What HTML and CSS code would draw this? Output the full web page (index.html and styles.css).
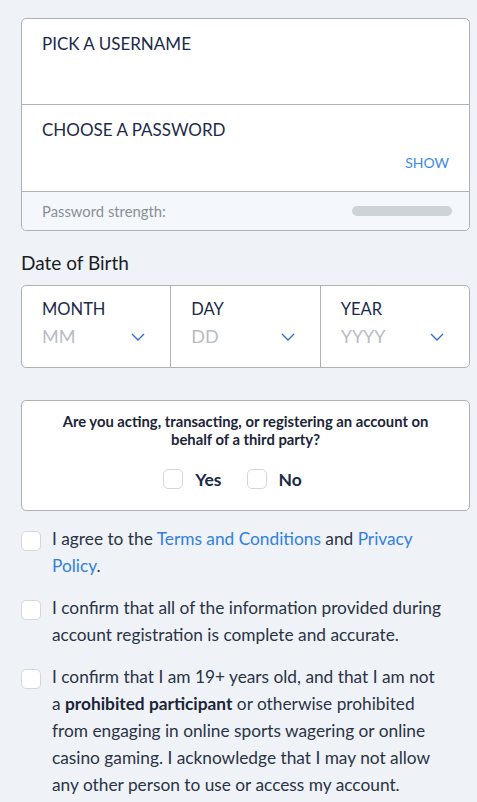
FILE: index.html
```html
<!doctype html>
<html>
<head>
<meta charset="UTF-8"/>
<title>Register</title>
<link rel="stylesheet" href="styles.css">
</head>
<body>
<div class="page">
    <div class="card creds">
        <div class="field">
            <div class="label">PICK A USERNAME</div>
        </div>
        <div class="field pass">
            <div class="label">CHOOSE A PASSWORD</div>
            <a class="show" href="javascript:">SHOW</a>
        </div>
        <div class="strength">
            <span>Password strength:</span>
            <span class="bar"></span>
        </div>
    </div>

    <div class="dob-title">Date of Birth</div>
    <div class="card dob">
        <div class="dob-col">
            <div class="label">MONTH</div>
            <div class="sel"><span>MM</span><svg width="14" height="8" viewBox="0 0 14 8"><path d="M1 1l6 6 6-6" fill="none" stroke="#2f6fd8" stroke-width="1.4"/></svg></div>
        </div>
        <div class="dob-col">
            <div class="label">DAY</div>
            <div class="sel"><span>DD</span><svg width="14" height="8" viewBox="0 0 14 8"><path d="M1 1l6 6 6-6" fill="none" stroke="#2f6fd8" stroke-width="1.4"/></svg></div>
        </div>
        <div class="dob-col">
            <div class="label">YEAR</div>
            <div class="sel"><span>YYYY</span><svg width="14" height="8" viewBox="0 0 14 8"><path d="M1 1l6 6 6-6" fill="none" stroke="#2f6fd8" stroke-width="1.4"/></svg></div>
        </div>
    </div>

    <div class="card third">
        <p>Are you acting, transacting, or registering an account on behalf of a third party?</p>
        <div class="choices">
            <label><span class="box"></span>Yes</label>
            <label><span class="box"></span>No</label>
        </div>
    </div>

    <div class="checks">
        <div class="check">
            <span class="box"></span>
            <p>I agree to the <a href="javascript:">Terms and Conditions</a> and <a href="javascript:">Privacy Policy</a>.</p>
        </div>
        <div class="check">
            <span class="box"></span>
            <p>I confirm that all of the information provided during account registration is complete and accurate.</p>
        </div>
        <div class="check">
            <span class="box"></span>
            <p>I confirm that I am 19+ years old, and that I am not a <b>prohibited participant</b> or otherwise prohibited from engaging in online sports wagering or online casino gaming. I acknowledge that I may not allow any other person to use or access my account.</p>
        </div>
    </div>
</div>
</body>
</html>
```

FILE: styles.css
```css
* {
    margin: 0;
    padding: 0;
    box-sizing: border-box;
}
body {
    background: #eff2f7;
    font-family: "Lato", "Open Sans", sans-serif;
    color: #1b2a47;
}
.page {
    padding: 18px 7px 0 21px;
}
.card {
    background: #fff;
    border: 1px solid #aeb1b6;
    border-radius: 5px;
}
.label {
    font-size: 17px;
    line-height: 20px;
    color: #1b2a4a;
}
.field {
    height: 86px;
    padding: 15px 20px 0 20px;
    border-bottom: 1px solid #aeb1b6;
}
.pass {
    height: 87px;
    display: flex;
    flex-direction: column;
}
.show {
    align-self: flex-end;
    margin-top: 14px;
    font-size: 14px;
    line-height: 17px;
    color: #3b8be8;
    text-decoration: none;
}
.strength {
    height: 38px;
    background: #f4f7fb;
    border-radius: 0 0 5px 5px;
    display: flex;
    align-items: center;
    justify-content: space-between;
    padding: 0 17px 0 20px;
    font-size: 14.8px;
    color: #8a8f96;
}
.bar {
    width: 100px;
    height: 10px;
    border-radius: 5px;
    background: #ced3d8;
}
.dob-title {
    margin-top: 21px;
    font-size: 19px;
    line-height: 22px;
    color: #1a1d24;
}
.dob {
    margin-top: 11px;
    height: 83px;
    display: flex;
}
.dob-col {
    flex: 1;
    padding: 13px 25px 0 20px;
    border-left: 1px solid #aeb1b6;
}
.dob-col:first-child {
    border-left: none;
}
.dob-col .label {
    font-size: 16.5px;
}
.sel {
    display: flex;
    align-items: center;
    justify-content: space-between;
    margin-top: 7px;
    font-size: 18px;
    line-height: 21px;
    color: #b8bcc3;
}
.third {
    margin-top: 32px;
    height: 111px;
    padding: 11px 30px 0;
    text-align: center;
}
.third p {
    font-size: 14.8px;
    font-weight: bold;
    line-height: 18px;
    color: #1b2537;
}
.choices {
    display: flex;
    justify-content: center;
    gap: 25px;
    margin-top: 20px;
    padding-right: 26px;
}
.choices label {
    display: flex;
    align-items: center;
    gap: 12px;
    height: 22px;
    font-size: 17.5px;
    font-weight: bold;
    color: #1b2a47;
}
.box {
    display: inline-block;
    width: 20px;
    height: 20px;
    flex: none;
    background: #fff;
    border: 1px solid #d3d7dd;
    border-radius: 5px;
}
.checks {
    display: flex;
    flex-direction: column;
    gap: 15px;
    margin-top: 14px;
    padding-right: 23px;
}
.check {
    display: flex;
    gap: 11px;
}
.check .box {
    margin-top: 6px;
}
.check p {
    font-size: 17.3px;
    line-height: 27px;
    color: #2a3446;
}
.check a {
    color: #2f80e0;
    text-decoration: none;
}
.check b {
    color: #1b2537;
}
```
